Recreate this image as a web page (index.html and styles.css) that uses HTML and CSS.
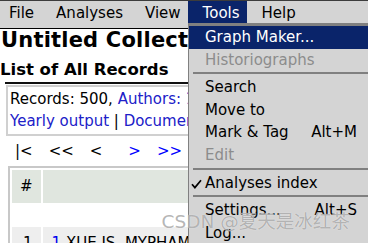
FILE: index.html
```html
<!DOCTYPE html>
<html>
<head>
<meta charset="utf-8">
<link rel="stylesheet" href="styles.css">
</head>
<body>
<div class="menubar">
  <span class="mi">File</span>
  <span class="mi">Analyses</span>
  <span class="mi">View</span>
  <span class="mi active">Tools</span>
  <span class="mi">Help</span>
</div>
<div class="content">
  <h1 class="title">Untitled Collection</h1>
  <h2 class="subtitle">List of All Records</h2>
  <div class="rule"></div>
  <div class="summary">
    <div class="line">Records: 500, <a class="link">Authors: 1582</a>, <a class="link">Journals: 216</a></div>
    <div class="line"><a class="link">Yearly output</a> | <a class="link">Document type</a> | <a class="link">Language</a></div>
  </div>
  <div class="pager">
    <span class="pg off">|&lt;</span>
    <span class="pg off">&lt;&lt;</span>
    <span class="pg off">&lt;</span>
    <span class="pg on next">&gt;</span>
    <span class="pg on">&gt;&gt;</span>
  </div>
  <table class="records">
    <tr class="head">
      <th class="num">#</th>
      <th class="main"></th>
    </tr>
    <tr class="blank">
      <td></td>
      <td></td>
    </tr>
    <tr class="row">
      <td class="num">1</td>
      <td class="main"><a class="idx">1</a> XUE JS, MYPHAM</td>
    </tr>
  </table>
</div>
<div class="dropdown">
  <div class="item hl"><span>Graph Maker...</span></div>
  <div class="item dis"><span>Historiographs</span></div>
  <div class="sep"></div>
  <div class="item"><span>Search</span></div>
  <div class="item"><span>Move to</span></div>
  <div class="item"><span>Mark &amp; Tag</span><span class="key">Alt+M</span></div>
  <div class="item dis"><span>Edit</span></div>
  <div class="sep"></div>
  <div class="item checked"><svg class="check" width="11" height="10" viewBox="0 0 11 10"><path d="M1 5.2 L3.9 8.6 L10 1.2" fill="none" stroke="#000" stroke-width="1.7"/></svg><span>Analyses index</span></div>
  <div class="sep"></div>
  <div class="item"><span>Settings...</span><span class="key">Alt+S</span></div>
  <div class="item"><span>Log...</span></div>
  <div class="item"><span>Exit</span></div>
</div>
<div class="watermark">CSDN @夏天是冰红茶</div>
</body>
</html>
```
FILE: styles.css
```css
html, body {
  margin: 0;
  height: 100%;
  overflow: hidden;
  background: #fff;
}
body {
  position: relative;
  font-family: "DejaVu Sans", Verdana, sans-serif;
  font-size: 15px;
  color: #000;
}
.menubar {
  display: flex;
  height: 29px;
  box-sizing: border-box;
  padding-left: 9px;
  background: #d4d4d4;
  border-top: 1px solid #3c3c3c;
  border-bottom: 1px solid #000;
  white-space: nowrap;
}
.mi {
  line-height: 22px;
  height: 22px;
  padding-top: 1px;
  margin-right: 22px;
}
.mi.active {
  background: #0a246a;
  color: #fff;
  padding: 1px 7px 0 15px;
  margin-left: -15px;
  margin-right: 15px;
}
.content {
  white-space: nowrap;
}
.title {
  margin: 0;
  padding-left: 1px;
  font-size: 21px;
  line-height: 23px;
  font-weight: bold;
  letter-spacing: 0.2px;
}
.subtitle {
  margin: 8px 0 0;
  font-size: 16.5px;
  line-height: 19px;
  font-weight: bold;
}
.rule {
  margin: 3px 0 0 5px;
  height: 2px;
  background: #111;
}
.summary {
  margin: 1px 0 0 6px;
  width: 360px;
  overflow: hidden;
  border: 2px solid #d0d0d0;
  padding: 2px 2px;
  line-height: 21.5px;
}
.link {
  color: #2020c8;
}
.pager {
  display: flex;
  margin: 7px 0 0 15px;
  line-height: 17.5px;
}
.pg {
  margin-right: 16px;
}
.pg.off {
  color: #000;
}
.pg.on {
  color: #0000ff;
}
.pg.next {
  margin-left: 10px;
}
.records {
  margin: 5px 0 0 8px;
  width: 380px;
  border: 2px solid #c8c8c8;
  border-spacing: 2px;
}
.records th {
  font-weight: normal;
  background: #e0e6df;
  height: 33px;
  box-sizing: border-box;
  padding: 0 8px;
}
.records th.num {
  width: 28px;
  text-align: right;
}
.blank td {
  height: 20px;
  padding: 0;
}
.row td {
  background: #eeeeee;
  padding: 7px 8px;
}
.row td.num {
  text-align: right;
}
.row td.main {
  padding-left: 9px;
}
.idx {
  color: #0000ee;
}
.dropdown {
  position: absolute;
  left: 188px;
  top: 23px;
  width: 181px;
  background: #d4d4d4;
  border-top: 3px solid #808080;
  border-left: 1px solid #808080;
  padding-bottom: 4px;
  white-space: nowrap;
}
.item {
  position: relative;
  display: flex;
  justify-content: space-between;
  height: 22.6px;
  line-height: 22.6px;
  padding: 0 13px 0 16px;
}
.item.hl {
  background: #0a246a;
  color: #fff;
}
.item.dis {
  color: #8c8c8c;
}
.check {
  position: absolute;
  left: 2px;
  top: 7px;
}
.sep {
  height: 2px;
  margin: 1px 0 2px 4px;
  background: #808080;
}
.watermark {
  position: absolute;
  left: 161.5px;
  top: 213px;
  font-family: "DejaVu Sans", "Noto Sans CJK SC", sans-serif;
  font-size: 18.5px;
  line-height: 18.5px;
  color: rgba(140, 140, 140, 0.65);
  text-shadow: 0 0 1px rgba(255, 255, 255, 0.9);
  white-space: nowrap;
}
```
